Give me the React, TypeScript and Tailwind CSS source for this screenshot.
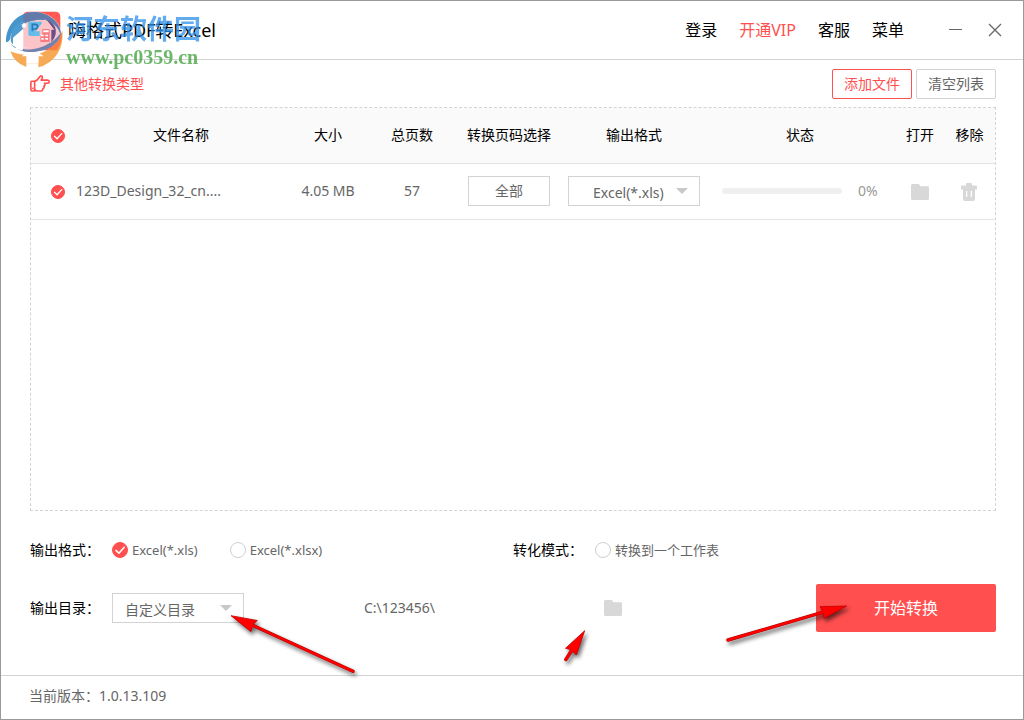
import { useState } from "react";
import type { ReactNode } from "react";

const ACCENT_CHECK = "M5 10.5 L8.6 14 L15.2 6.6";

function CheckMark({ className }: { className: string }) {
  return (
    <svg viewBox="0 0 20 20" className={className} aria-hidden="true">
      <path d={ACCENT_CHECK} fill="none" stroke="#fff" strokeWidth="2" strokeLinecap="round" strokeLinejoin="round" />
    </svg>
  );
}

function RoundCheckbox({ label }: { label: string }) {
  return (
    <span className="relative inline-flex size-3.5 align-middle">
      <input
        type="checkbox"
        defaultChecked
        aria-label={label}
        className="peer size-3.5 appearance-none rounded-full border border-[#d0d0d0] checked:border-[#ff4f4f] checked:bg-[#ff4f4f]"
      />
      <CheckMark className="pointer-events-none absolute inset-0 hidden size-3.5 peer-checked:block" />
    </span>
  );
}

function RadioOption({ name, label, checked }: { name: string; label: string; checked?: boolean }) {
  return (
    <label className="flex items-center gap-1 text-[13px] text-[#666]">
      <span className="relative flex size-4">
        <input
          type="radio"
          name={name}
          defaultChecked={checked}
          className="peer size-4 appearance-none rounded-full border border-[#cfcfcf] checked:border-[#ff4f4f] checked:bg-[#ff4f4f]"
        />
        <CheckMark className="pointer-events-none absolute inset-0 hidden size-4 peer-checked:block" />
      </span>
      {label}
    </label>
  );
}

function Dropdown({ label, options, pad }: { label: string; options: string[]; pad: string }) {
  return (
    <span className="relative inline-flex align-middle">
      <select
        aria-label={label}
        className={`h-[30px] w-[132px] appearance-none border border-[#d3d3d3] bg-white pt-1 text-sm text-[#666] ${pad}`}
      >
        {options.map((o) => (
          <option key={o}>{o}</option>
        ))}
      </select>
      <svg viewBox="0 0 12 6" className="pointer-events-none absolute top-3 right-3 h-1.5 w-3" aria-hidden="true">
        <path d="M0 0H12L6 6Z" fill="#c8c8c8" />
      </svg>
    </span>
  );
}

function FolderIcon() {
  return (
    <svg viewBox="0 0 18 16" className="h-4 w-[18px]" aria-hidden="true">
      <path d="M0 1.5Q0 0 1.5 0H7.2Q8 0 8.5 .8L9.3 2.2H16.6Q18 2.2 18 3.6V14.4Q18 16 16.4 16H1.6Q0 16 0 14.4Z" fill="#d8d8d8" />
    </svg>
  );
}

function TrashIcon() {
  return (
    <svg viewBox="0 0 16 18" className="h-[18px] w-4" aria-hidden="true">
      <path
        fillRule="evenodd"
        fill="#d8d8d8"
        d="M5 2.6V1.2Q5 0 6.2 0H9.8Q11 0 11 1.2V2.6H14.8Q16 2.6 16 3.8V6.4H14V16.2Q14 18 12.2 18H3.8Q2 18 2 16.2V6.4H0V3.8Q0 2.6 1.2 2.6ZM5 8V14H6.3V8ZM9.7 8V14H11V8Z"
      />
    </svg>
  );
}

function HandIcon() {
  return (
    <svg viewBox="0 0 20 17" className="h-[17px] w-5" fill="none" stroke="#ff4f4f" strokeWidth="1.6" strokeLinejoin="round" strokeLinecap="round" aria-hidden="true">
      <path d="M.9 7.2Q.9 6.3 1.8 6.3H4.6V16H1.8Q.9 16 .9 15Z" />
      <path d="M4.6 6.6C6.8 5.8 8.6 3.6 10 1.5Q11 .4 12 1.2Q12.8 2 12.2 3.1L11.2 5.1H17.6Q19.2 5.2 19.2 6.7Q19.2 8.2 17.6 8.3H14.4Q15.3 9 14.9 10Q14.6 10.9 13.8 11.1Q14.5 12 14 12.8Q13.6 13.5 12.9 13.6Q13 15.8 11.2 16H7.6Q6 15.9 4.6 14.6" />
      <path d="M2.8 13.2V13.5" />
    </svg>
  );
}

function BrandMark() {
  return (
    <svg viewBox="0 0 186 204" className="h-[68px] w-[62px]" aria-hidden="true">
      <rect x="66" y="32" width="112" height="116" rx="14" fill="#ff5a55" />
      <path d="M28 151Q98 178 150 140Q180 116 184 88Q190 150 145 184Q128 196 112 199V187H76V198Q40 186 28 151Z" fill="#f6aa55" />
      <path d="M142 147Q174 124 183 92Q184 124 168 148H142Z" fill="#fb7d45" />
      <path d="M76 187V166H62L94 142L128 166H113V187Z" fill="#fff" />
      <path d="M15 124C18 66 60 32 104 33C148 36 178 64 180 96C166 130 120 150 76 148C48 147 28 138 15 124Z" fill="#fff" />
      <path d="M66 68Q100 44 144 58Q170 70 177 96Q163 130 112 143Q90 149 66 145Z" fill="#fbc4c8" />
      <path d="M15 124C14 68 56 31 104 33C152 38 184 72 179 104C176 72 142 52 106 57C72 61 36 82 29 104C28 117 24 122 15 124Z" fill="#4794cb" />
      <path d="M67 40Q84 33 104 33C148 37 182 68 179 104C174 76 144 50 106 57Q84 60 67 67Z" fill="#647ba9" />
      <path d="M23 121C36 146 90 156 130 136C157 123 177 106 180 92C179 121 155 139 125 148C78 160 37 148 23 121Z" fill="#5797c4" />
      <path d="M66 144C102 152 163 128 180 92C178 116 156 138 123 148Q92 156 66 151Z" fill="#7381ac" />
      <path d="M30 104Q36 74 66 58V84L36 110V130Q26 121 30 104Z" fill="#4c9bd1" />
      <rect x="82" y="62" width="41" height="43" rx="4" fill="#65bce8" />
      <path d="M94 91V70H102Q110 70 110 77Q110 84 102 84H94" fill="none" stroke="#2979b4" strokeWidth="5" />
      <path d="M104 91L132 55L163 86H152V124H116V91Z" fill="#fbc4c8" />
      <path d="M145 60Q169 75 164 100Q161 113 151 124V86H160L138 58Z" fill="#6b4f8b" />
      <path d="M124 84H146V123H118V106H124Z" fill="#f77b80" />
      <path d="M127 88H143V94H127ZM121 101H128V106H121ZM133 101H141V106H133ZM121 111H128V116H121ZM133 111H141V116H133Z" fill="#fff" />
      <path d="M69 64L72 70L78 71L74 75L75 81L69 78L63 81L64 75L60 71L66 70Z" fill="#fff" />
      <path d="M44 145V112H36L65 86L86 108V139H65V148Z" fill="#fff" />
      <path d="M67 88L87 108V139H67Z" fill="#fbc4c8" />
    </svg>
  );
}

function Watermark() {
  return (
    <div className="pointer-events-none absolute top-2 left-[65px] flex flex-col opacity-75" aria-hidden="true">
      <span className="h-[38px] font-['Noto_Sans_CJK_SC',sans-serif] text-[27px] leading-[38px] font-bold whitespace-nowrap text-[#2f90ea]">
        河东软件园
      </span>
      <span className="font-['Liberation_Serif',serif] text-[20px] leading-5 font-bold whitespace-nowrap text-[#3da03a]">
        www.pc0359.cn
      </span>
    </div>
  );
}

function Arrow({ className, viewBox, head, shaft }: { className: string; viewBox: string; head: string; shaft: string }) {
  return (
    <svg
      viewBox={viewBox}
      className={`pointer-events-none absolute overflow-visible drop-shadow-[2px_3px_2px_rgba(0,0,0,0.6)] ${className}`}
      aria-hidden="true"
    >
      <path d={shaft} stroke="#b00000" strokeWidth="3.4" strokeLinecap="round" />
      <path d={head} fill="#ff0000" stroke="#c00000" strokeWidth=".8" />
      <path d={shaft} stroke="#ff0000" strokeWidth="2.4" strokeLinecap="round" />
    </svg>
  );
}

function Th({ children }: { children: ReactNode }) {
  return <th className="p-0 text-center font-normal whitespace-nowrap">{children}</th>;
}

export default function App() {
  const [progress] = useState(0);
  return (
    <div className="relative flex min-h-screen flex-col border border-[#999] bg-white font-['Noto_Sans','Noto_Sans_CJK_SC',sans-serif] text-sm text-[#666]">
      <header className="relative flex h-[59px] items-center justify-between border-b border-[#d3d3d3] pr-5">
        <div className="flex items-center gap-[5px]">
          <div className="h-[58px] w-[62px]">
            <BrandMark />
          </div>
          <h1 className="text-lg whitespace-nowrap text-black">嗨格式PDF转Excel</h1>
        </div>
        <Watermark />
        <div className="flex items-center">
          <nav className="flex gap-[22px] text-base whitespace-nowrap text-black">
            <a href="#login">登录</a>
            <a href="#vip" className="text-[#ff4f4f]">开通VIP</a>
            <a href="#service">客服</a>
            <a href="#menu">菜单</a>
          </nav>
          <button type="button" aria-label="最小化" className="ml-11 flex size-4 items-center justify-center">
            <svg viewBox="0 0 14 14" className="size-3.5" aria-hidden="true">
              <path d="M0 6.5H13" stroke="#666" />
            </svg>
          </button>
          <button type="button" aria-label="关闭" className="ml-[23px] flex size-4 items-center justify-center">
            <svg viewBox="0 0 14 14" className="size-3.5" aria-hidden="true">
              <path d="M1 1L13 13M13 1L1 13" stroke="#666" strokeWidth="1.3" />
            </svg>
          </button>
        </div>
      </header>

      <main className="flex flex-1 flex-col px-[29px]">
        <div className="flex h-[47px] items-center justify-between">
          <a href="#types" className="flex items-center gap-2.5 text-[#ff4f4f]">
            <HandIcon />
            其他转换类型
          </a>
          <div className="-mr-0.5 flex gap-1">
            <button type="button" className="h-[30px] w-20 rounded-xs border border-[#ff4f4f] text-[#ff4f4f]">
              添加文件
            </button>
            <button type="button" className="h-[30px] w-20 rounded-xs border border-[#d3d3d3]">
              清空列表
            </button>
          </div>
        </div>

        <section className="-mr-0.5 flex-1 border border-dashed border-[#d3d3d3]">
          <table className="w-full table-fixed border-collapse">
            <colgroup>
              <col className="w-[45px]" />
              <col className="w-[210px]" />
              <col className="w-[84px]" />
              <col className="w-[84px]" />
              <col className="w-[110px]" />
              <col className="w-[140px]" />
              <col className="w-[192px]" />
              <col className="w-12" />
              <col className="w-[51px]" />
            </colgroup>
            <thead>
              <tr className="h-[55px] border-b border-[#e4e4e4] bg-[#fafafa] text-black">
                <th className="p-0 pl-2">
                  <RoundCheckbox label="全选" />
                </th>
                <Th>文件名称</Th>
                <Th>大小</Th>
                <Th>总页数</Th>
                <Th>转换页码选择</Th>
                <Th>输出格式</Th>
                <Th>状态</Th>
                <Th>打开</Th>
                <Th>移除</Th>
              </tr>
            </thead>
            <tbody>
              <tr className="h-14 border-b border-[#e4e4e4] text-center">
                <td className="p-0 pl-2">
                  <RoundCheckbox label="123D_Design_32_cn...." />
                </td>
                <td className="p-0 text-left whitespace-nowrap">123D_Design_32_cn....</td>
                <td className="p-0 whitespace-nowrap">4.05 MB</td>
                <td className="p-0">57</td>
                <td className="p-0">
                  <button type="button" className="h-[30px] w-[82px] border border-[#d3d3d3] align-middle">
                    全部
                  </button>
                </td>
                <td className="p-0">
                  <Dropdown label="输出格式" options={["Excel(*.xls)", "Excel(*.xlsx)"]} pad="pl-6" />
                </td>
                <td className="p-0">
                  <div className="flex items-center gap-4 pl-[18px] text-[#999]">
                    <div className="h-1.5 w-[120px] overflow-hidden rounded-full bg-[#efefef]">
                      <div className="h-full bg-[#ff4f4f]" style={{ width: `${progress}%` }} />
                    </div>
                    {progress}%
                  </div>
                </td>
                <td className="p-0">
                  <button type="button" aria-label="打开" className="align-middle">
                    <FolderIcon />
                  </button>
                </td>
                <td className="p-0 pr-0.5">
                  <button type="button" aria-label="移除" className="align-middle">
                    <TrashIcon />
                  </button>
                </td>
              </tr>
            </tbody>
          </table>
        </section>

        <div className="-mr-0.5 pt-[27px] pb-[43px]">
          <div className="flex h-6 items-center">
            <div className="flex w-[483px] items-center">
              <span className="w-[82px] text-black">输出格式：</span>
              <div className="flex gap-8">
                <RadioOption name="format" label="Excel(*.xls)" checked />
                <RadioOption name="format" label="Excel(*.xlsx)" />
              </div>
            </div>
            <span className="w-[82px] text-black">转化模式：</span>
            <RadioOption name="mode" label="转换到一个工作表" />
          </div>
          <div className="mt-[22px] flex h-12 items-center">
            <span className="w-[82px] text-black">输出目录：</span>
            <Dropdown label="输出目录" options={["自定义目录", "原文件目录"]} pad="pl-3" />
            <span className="ml-[120px] w-60">C:\123456\</span>
            <button type="button" aria-label="选择目录">
              <FolderIcon />
            </button>
            <button type="button" className="ml-auto h-12 w-[180px] rounded-xs bg-[#ff4f4f] text-base text-white">
              开始转换
            </button>
          </div>
        </div>
      </main>

      <footer className="flex h-11 items-center border-t border-[#d3d3d3] px-7 pb-1">当前版本：1.0.13.109</footer>

      <Arrow
        className="top-[614px] left-[230px] h-[58px] w-[124px]"
        viewBox="231 615 124 58"
        head="M231 615.7L257.3 620.5L252.5 625L251 631.7Z"
        shaft="M252 625L353 671.3"
      />
      <Arrow
        className="top-[629px] left-[563px] h-8 w-6"
        viewBox="564 630 24 32"
        head="M584.7 630.7L565.5 648.3L571.5 650L576.3 655Z"
        shaft="M572 650L565.8 659.5"
      />
      <Arrow
        className="top-[603px] left-[726px] h-10 w-[122px]"
        viewBox="727 604 122 40"
        head="M846.7 606L820 606.7L823 612L824 618.3Z"
        shaft="M824 611.8L728 640"
      />
    </div>
  );
}
